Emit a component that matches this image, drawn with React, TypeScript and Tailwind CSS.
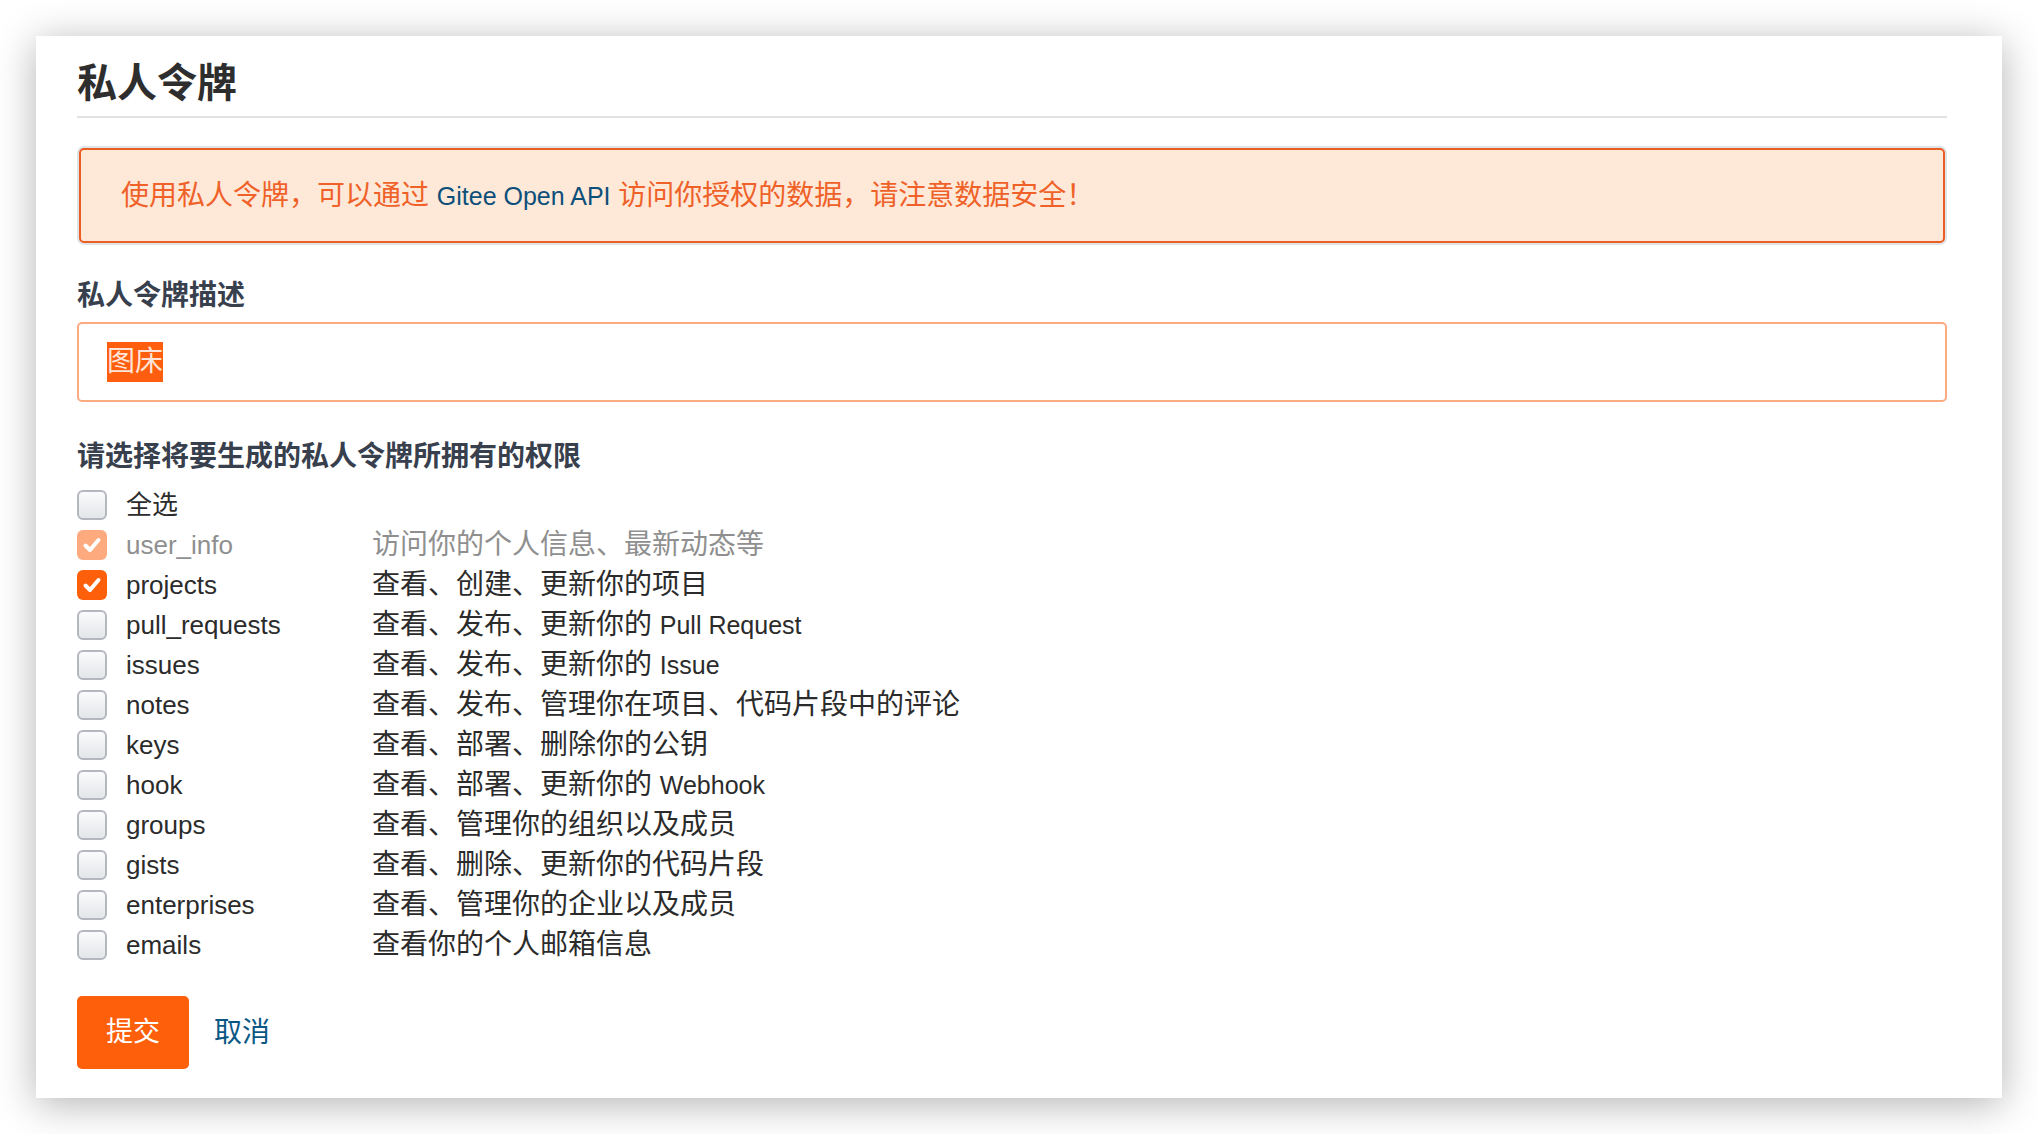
import React from 'react';

interface Scope {
  name: string;
  desc: React.ReactNode;
  state?: 'locked' | 'checked';
}

// Latin words inside Chinese lines render a little narrower in the reference
const En: React.FC<{ children: React.ReactNode }> = ({ children }) => (
  <span className="text-[25px]">{children}</span>
);

const scopes: Scope[] = [
  { name: 'user_info', desc: '访问你的个人信息、最新动态等', state: 'locked' },
  { name: 'projects', desc: '查看、创建、更新你的项目', state: 'checked' },
  { name: 'pull_requests', desc: <>查看、发布、更新你的 <En>Pull Request</En></> },
  { name: 'issues', desc: <>查看、发布、更新你的 <En>Issue</En></> },
  { name: 'notes', desc: '查看、发布、管理你在项目、代码片段中的评论' },
  { name: 'keys', desc: '查看、部署、删除你的公钥' },
  { name: 'hook', desc: <>查看、部署、更新你的 <En>Webhook</En></> },
  { name: 'groups', desc: '查看、管理你的组织以及成员' },
  { name: 'gists', desc: '查看、删除、更新你的代码片段' },
  { name: 'enterprises', desc: '查看、管理你的企业以及成员' },
  { name: 'emails', desc: '查看你的个人邮箱信息' },
];

const Check = () => (
  <svg viewBox="0 0 30 30" className="h-[30px] w-[30px]">
    <polyline
      points="8.5,15.5 13,20 21.5,10"
      fill="none"
      stroke="#fff"
      strokeWidth="4"
      strokeLinecap="round"
      strokeLinejoin="round"
    />
  </svg>
);

const Box: React.FC<{ state?: 'locked' | 'checked' }> = ({ state }) => {
  if (state === 'checked') {
    return (
      <span className="flex h-[30px] w-[30px] shrink-0 items-center justify-center rounded-[6px] bg-[#fe5f0b]">
        <Check />
      </span>
    );
  }
  if (state === 'locked') {
    return (
      <span className="flex h-[30px] w-[30px] shrink-0 items-center justify-center rounded-[6px] bg-[#fdab7e]">
        <Check />
      </span>
    );
  }
  return (
    <span className="block h-[30px] w-[30px] shrink-0 rounded-[6px] border-2 border-[#b4b8be] bg-linear-to-b from-[#fafbfc] to-[#e3e6ea]" />
  );
};

const Row: React.FC<{ scope: Scope }> = ({ scope }) => {
  const muted = scope.state === 'locked';
  return (
    <div className="flex h-[40px] items-center">
      <Box state={scope.state} />
      <span
        className={`ml-[19px] w-[246px] text-[26px] ${muted ? 'text-[#8f8f8f]' : 'text-[#2b2b2b]'}`}
      >
        {scope.name}
      </span>
      <span className={`text-[28px] ${muted ? 'text-[#8f8f8f]' : 'text-[#2b2b2b]'}`}>
        {scope.desc}
      </span>
    </div>
  );
};

export default function App() {
  return (
    <div
      className="h-[1134px] w-[2038px] overflow-hidden bg-white pl-[36px] pt-[36px]"
      style={{ fontFamily: '"Liberation Sans", "Noto Sans CJK SC", sans-serif' }}
    >
      <div className="h-[1062px] w-[1966px] bg-white pl-[41px] pr-[55px] shadow-[0_6px_38px_rgba(0,0,0,0.3)]">
        {/* Header */}
        <div className="border-b-2 border-[#e2e2e2] pb-[9px] pt-[23px]">
          <h2 className="text-[40px] font-semibold leading-[48px] text-[#2e2e2e]">私人令牌</h2>
        </div>

        {/* Notice */}
        <div className="mx-[2px] mt-[30px] flex h-[95px] items-center rounded-[5px] border-2 border-[#ec5d22] bg-[#fee9d8] pl-[40px] text-[28px] text-[#ef6128] ring-2 ring-[#dde4ea]">
          <span>
            使用私人令牌，可以通过 <span className="text-[25px] text-[#0d4f7b]">Gitee Open API</span>{' '}
            访问你授权的数据，请注意数据安全！
          </span>
        </div>

        {/* Description */}
        <div className="mt-[33px] text-[28px] font-semibold leading-[40px] text-[#38404e]">私人令牌描述</div>
        <div className="mt-[6px] flex h-[80px] items-center rounded-[5px] border-2 border-[#fcab80] pl-[28px]">
          <span className="bg-[#fe5e0d] text-[28px] leading-[40px] text-[#fde4d8]">图床</span>
        </div>

        {/* Scopes */}
        <div className="mt-[35px] text-[28px] font-semibold leading-[40px] text-[#38404e]">
          请选择将要生成的私人令牌所拥有的权限
        </div>
        <div className="mt-[8px] flex flex-col">
          <div className="flex h-[40px] items-center">
            <Box />
            <span className="ml-[19px] text-[26px] text-[#2b2b2b]">全选</span>
          </div>
          {scopes.map((s) => (
            <Row key={s.name} scope={s} />
          ))}
        </div>

        {/* Actions */}
        <div className="mt-[31px] flex items-center">
          <button className="flex h-[73px] w-[112px] items-center justify-center rounded-[5px] bg-[#fe5f0b] text-[27px] text-white">
            提交
          </button>
          <a className="ml-[25px] text-[28px] text-[#0b5885]">取消</a>
        </div>
      </div>
    </div>
  );
}
